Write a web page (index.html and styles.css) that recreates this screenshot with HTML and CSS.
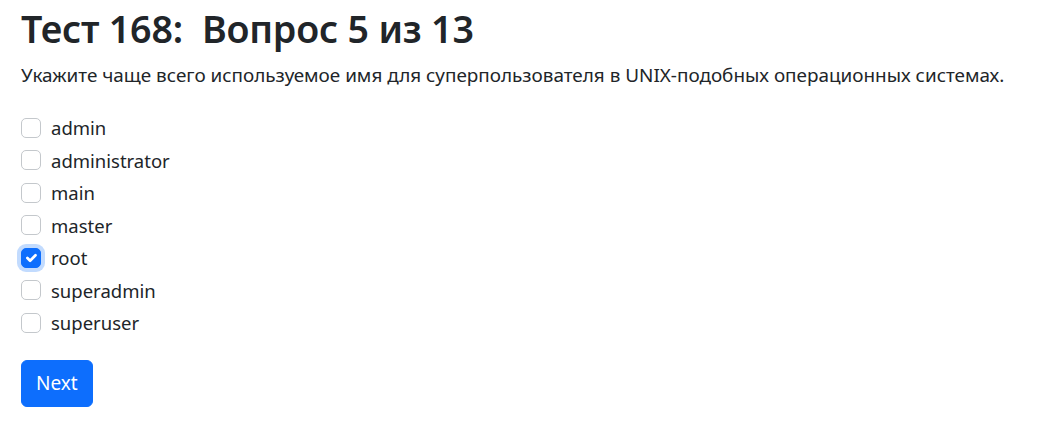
FILE: index.html
```html
<!DOCTYPE html>
<html lang="ru">
<head>
<meta charset="utf-8">
<title>Тест 168</title>
<link rel="stylesheet" href="styles.css">
</head>
<body>
<main class="page">
  <h1 class="title">Тест 168:&nbsp; Вопрос 5 из 13</h1>
  <p class="question">Укажите чаще всего используемое имя для суперпользователя в UNIX-подобных операционных системах.</p>
  <form class="answers">
    <label class="check"><input type="checkbox" class="check-input"><span>admin</span></label>
    <label class="check"><input type="checkbox" class="check-input"><span>administrator</span></label>
    <label class="check"><input type="checkbox" class="check-input"><span>main</span></label>
    <label class="check"><input type="checkbox" class="check-input"><span>master</span></label>
    <label class="check"><input type="checkbox" class="check-input focused" checked><span>root</span></label>
    <label class="check"><input type="checkbox" class="check-input"><span>superadmin</span></label>
    <label class="check"><input type="checkbox" class="check-input"><span>superuser</span></label>
    <button type="button" class="btn">Next</button>
  </form>
</main>
</body>
</html>
```

FILE: styles.css
```css
html, body {
  margin: 0;
  padding: 0;
  background: #fff;
}
body {
  font-family: "Noto Sans", "Open Sans", sans-serif;
  color: #212529;
}
.page {
  padding: 6px 21px 0 21px;
}
.title {
  margin: 0 0 10px 0;
  font-size: 37.6px;
  font-weight: 600;
  line-height: 1.2;
  letter-spacing: -0.2px;
}
.question {
  margin: 0 0 22px 0;
  font-size: 18.9px;
  line-height: 1.5;
}
.answers {
  display: flex;
  flex-direction: column;
  align-items: flex-start;
}
.check {
  display: flex;
  align-items: center;
  gap: 10px;
  height: 32.5px;
  font-size: 18.5px;
}
.check-input {
  appearance: none;
  -webkit-appearance: none;
  margin: 0;
  width: 20px;
  height: 20px;
  border: 1px solid #c4c8cc;
  border-radius: 5px;
  background: #fff;
  flex: none;
}
.check-input:checked {
  background-color: #0d6efd;
  border-color: #0d6efd;
  background-image: url("data:image/svg+xml,%3csvg xmlns='http://www.w3.org/2000/svg' viewBox='0 0 20 20'%3e%3cpath fill='none' stroke='%23fff' stroke-linecap='round' stroke-linejoin='round' stroke-width='3' d='m6 10 3 3 6-6'/%3e%3c/svg%3e");
  background-size: 100% 100%;
}
.check-input.focused {
  box-shadow: 0 0 0 4px rgba(13, 110, 253, 0.25);
}
.btn {
  margin-top: 21px;
  font-family: inherit;
  font-size: 19px;
  line-height: 1.5;
  padding: 8px 14px;
  color: #fff;
  background: #0d6efd;
  border: 1px solid #0d6efd;
  border-radius: 6px;
  height: 47px;
}
```
